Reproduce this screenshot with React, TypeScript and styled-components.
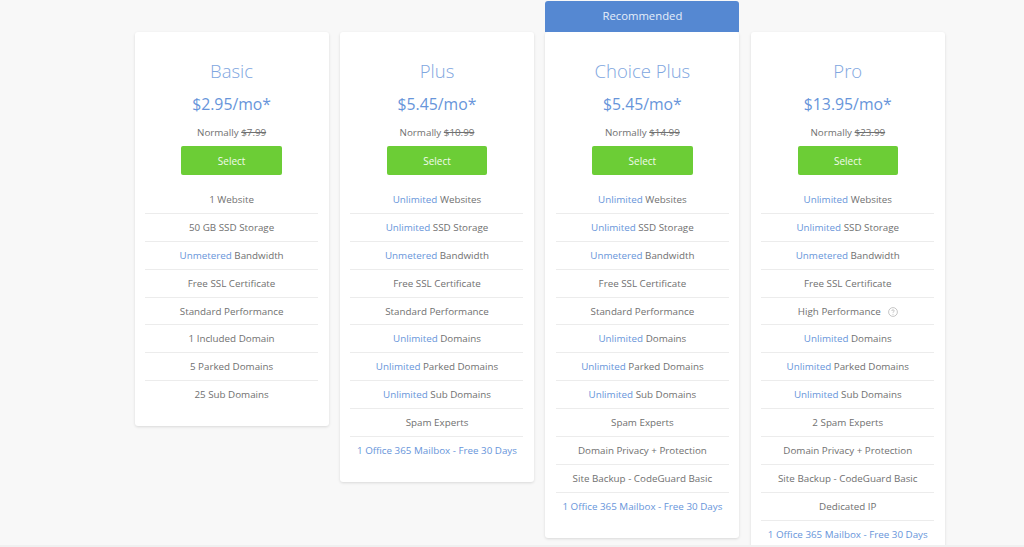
import styled, { createGlobalStyle } from 'styled-components';

type Feature = { accent?: string; text?: string; help?: boolean };

type Plan = {
  name: string;
  price: string;
  normally: string;
  recommended?: boolean;
  features: Feature[];
};

const mailbox: Feature = { accent: '1 Office 365 Mailbox - Free 30 Days' };

const plans: Plan[] = [
  {
    name: 'Basic',
    price: '$2.95/mo*',
    normally: '$7.99',
    features: [
      { text: '1 Website' },
      { text: '50 GB SSD Storage' },
      { accent: 'Unmetered', text: 'Bandwidth' },
      { text: 'Free SSL Certificate' },
      { text: 'Standard Performance' },
      { text: '1 Included Domain' },
      { text: '5 Parked Domains' },
      { text: '25 Sub Domains' },
    ],
  },
  {
    name: 'Plus',
    price: '$5.45/mo*',
    normally: '$10.99',
    features: [
      { accent: 'Unlimited', text: 'Websites' },
      { accent: 'Unlimited', text: 'SSD Storage' },
      { accent: 'Unmetered', text: 'Bandwidth' },
      { text: 'Free SSL Certificate' },
      { text: 'Standard Performance' },
      { accent: 'Unlimited', text: 'Domains' },
      { accent: 'Unlimited', text: 'Parked Domains' },
      { accent: 'Unlimited', text: 'Sub Domains' },
      { text: 'Spam Experts' },
      mailbox,
    ],
  },
  {
    name: 'Choice Plus',
    price: '$5.45/mo*',
    normally: '$14.99',
    recommended: true,
    features: [
      { accent: 'Unlimited', text: 'Websites' },
      { accent: 'Unlimited', text: 'SSD Storage' },
      { accent: 'Unmetered', text: 'Bandwidth' },
      { text: 'Free SSL Certificate' },
      { text: 'Standard Performance' },
      { accent: 'Unlimited', text: 'Domains' },
      { accent: 'Unlimited', text: 'Parked Domains' },
      { accent: 'Unlimited', text: 'Sub Domains' },
      { text: 'Spam Experts' },
      { text: 'Domain Privacy + Protection' },
      { text: 'Site Backup - CodeGuard Basic' },
      mailbox,
    ],
  },
  {
    name: 'Pro',
    price: '$13.95/mo*',
    normally: '$23.99',
    features: [
      { accent: 'Unlimited', text: 'Websites' },
      { accent: 'Unlimited', text: 'SSD Storage' },
      { accent: 'Unmetered', text: 'Bandwidth' },
      { text: 'Free SSL Certificate' },
      { text: 'High Performance', help: true },
      { accent: 'Unlimited', text: 'Domains' },
      { accent: 'Unlimited', text: 'Parked Domains' },
      { accent: 'Unlimited', text: 'Sub Domains' },
      { text: '2 Spam Experts' },
      { text: 'Domain Privacy + Protection' },
      { text: 'Site Backup - CodeGuard Basic' },
      { text: 'Dedicated IP' },
      mailbox,
    ],
  },
];

const App = () => (
  <>
    <GlobalStyle />
    <Page>
      {plans.map((plan) => (
        <Card key={plan.name}>
          {plan.recommended && <Ribbon>Recommended</Ribbon>}
          <Title>{plan.name}</Title>
          <Price>{plan.price}</Price>
          <Normally>
            Normally <s>{plan.normally}</s>
          </Normally>
          <SelectButton>Select</SelectButton>
          <Features>
            {plan.features.map((f, i) => (
              <FeatureRow key={i}>
                {f.accent && <Accent>{f.accent}</Accent>}
                {f.accent && f.text && ' '}
                {f.text}
                {f.help && (
                  <HelpIcon width="10" height="10" viewBox="0 0 10 10">
                    <circle cx="5" cy="5" r="4.4" fill="none" stroke="#b8b8b8" strokeWidth="0.8" />
                    <path
                      d="M3.8 4c0-.8.5-1.2 1.2-1.2s1.2.4 1.2 1.1c0 .9-1.2.9-1.2 1.9"
                      fill="none"
                      stroke="#b8b8b8"
                      strokeWidth="0.8"
                    />
                    <circle cx="5" cy="7.2" r="0.5" fill="#b8b8b8" />
                  </HelpIcon>
                )}
              </FeatureRow>
            ))}
          </Features>
        </Card>
      ))}
    </Page>
  </>
);

const GlobalStyle = createGlobalStyle`
  html, body {
    margin: 0;
    padding: 0;
    height: 547px;
    overflow: hidden;
    background: #f0f0f0;
  }
  * {
    box-sizing: border-box;
  }
`;

const Page = styled.main`
  display: flex;
  align-items: flex-start;
  gap: 11.4px;
  height: 545px;
  padding: 32px 0 0 134.6px;
  font-family: 'Open Sans', sans-serif;
  background: #f8f8f8;
  overflow: hidden;
`;

const Card = styled.section`
  position: relative;
  flex: 0 0 194px;
  padding: 27px 10.5px 17px;
  background: #fff;
  border-radius: 3px;
  box-shadow: 0 1px 3px rgba(0, 0, 0, 0.13);
  text-align: center;
`;

const Ribbon = styled.div`
  position: absolute;
  top: -31px;
  left: 0;
  right: 0;
  height: 31px;
  background: #5588d2;
  border-radius: 3px 3px 0 0;
  color: #e6eefa;
  font-size: 11.3px;
  line-height: 30px;
`;

const Title = styled.h2`
  margin: 0;
  color: #80a6e0;
  font-size: 18.5px;
  font-weight: 300;
  line-height: 24px;
`;

const Price = styled.div`
  margin-top: 10px;
  color: #6795da;
  font-size: 15.8px;
  line-height: 22px;
`;

const Normally = styled.div`
  margin-top: 10.5px;
  color: #707070;
  font-size: 9.8px;
  line-height: 14px;
`;

const SelectButton = styled.button`
  display: block;
  width: 100.5px;
  height: 29px;
  margin: 6.5px auto 0;
  padding: 0;
  border: 0;
  border-radius: 2px;
  background: #6ccd36;
  color: #f2fbec;
  font-family: inherit;
  font-size: 10px;
`;

const Features = styled.ul`
  margin: 11px 0 0;
  padding: 0;
  list-style: none;
`;

const FeatureRow = styled.li`
  height: 27.88px;
  color: #707070;
  font-size: 9.8px;
  line-height: 27px;
  border-bottom: 1px solid #ececec;

  &:last-child {
    border-bottom: 0;
  }
`;

const Accent = styled.span`
  color: #6795da;
`;

const HelpIcon = styled.svg`
  margin-left: 7px;
  vertical-align: -2px;
`;

export default App;
